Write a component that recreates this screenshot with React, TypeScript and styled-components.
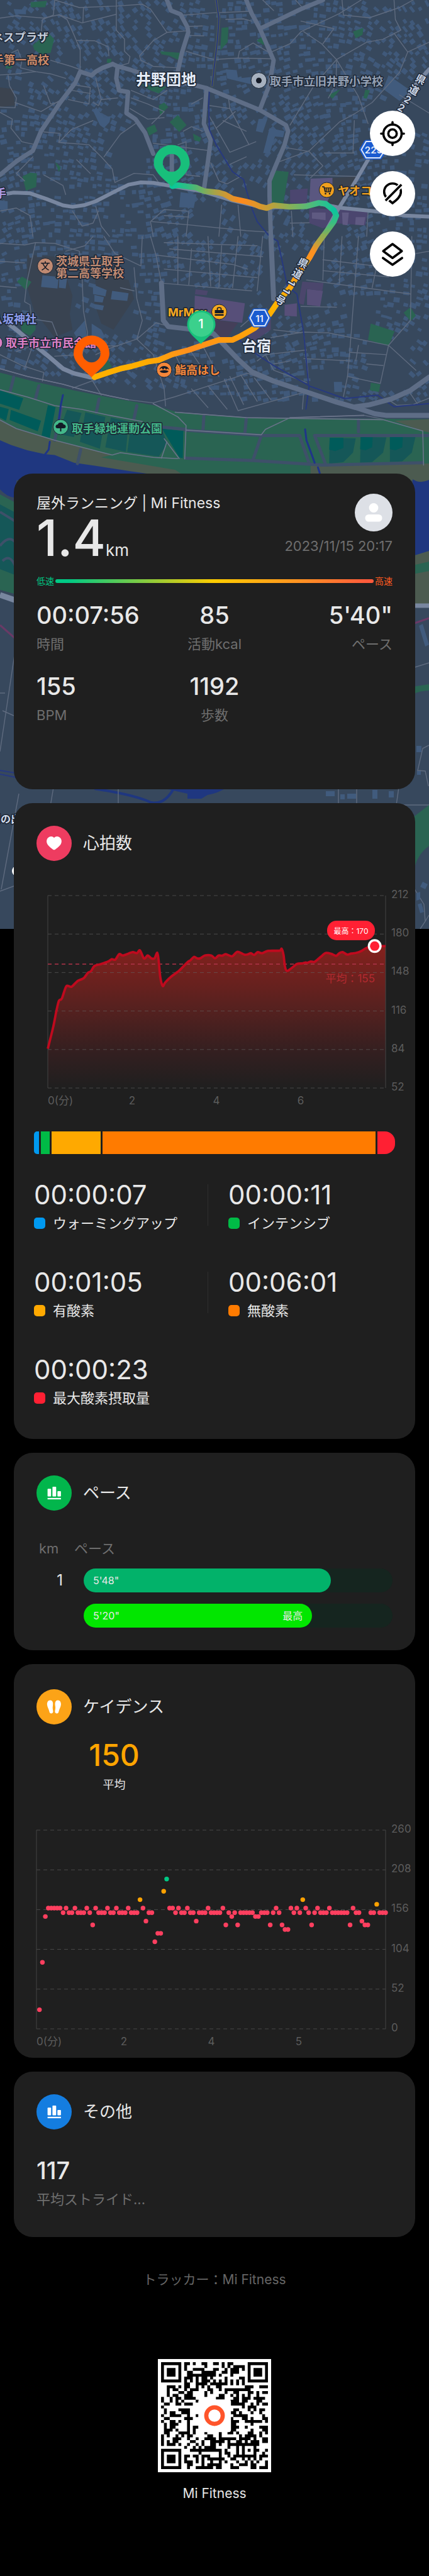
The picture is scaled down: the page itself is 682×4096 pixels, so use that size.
import React from 'react';
import styled, { createGlobalStyle } from 'styled-components';

const color = {
  page: '#000000',
  card: '#1f1f1f',
  text: '#e8e8e8',
  muted: '#6e6e6e',
  axis: '#5c5c5c',
  grid: '#444444',
};

const GlobalStyle = createGlobalStyle`
  * { box-sizing: border-box; }
  body {
    margin: 0;
    background: ${color.page};
    color: ${color.text};
    font-family: Inter, 'Noto Sans CJK JP', sans-serif;
  }
`;

/* ---------- layout ---------- */

const Page = styled.div`
  display: grid;
  grid-template-columns: minmax(0, 1fr);
`;

const MapLayer = styled.div`
  grid-area: 1 / 1;
  align-self: start;
  svg { display: block; width: 100%; height: auto; }
`;

const Content = styled.main`
  grid-area: 1 / 1;
  position: relative;
  display: flex;
  flex-direction: column;
  gap: 22px;
  padding: 0 22px 116px;
`;

const MapControls = styled.div`
  display: flex;
  flex-direction: column;
  align-items: flex-end;
  gap: 24px;
  padding: 176px 0 291px;
`;

const RoundButton = styled.button`
  width: 72px;
  height: 72px;
  padding: 0;
  border: 0;
  border-radius: 50%;
  background: #ffffff;
  cursor: pointer;
  svg { display: block; width: 72px; height: 72px; }
`;

const Card = styled.section<{ $top?: number; $bottom: number }>`
  padding: ${(p) => p.$top ?? 36}px 0 ${(p) => p.$bottom}px;
  border-radius: 30px;
  background: ${color.card};
`;

/* ---------- summary ---------- */

const SummaryHead = styled.div`
  display: flex;
  justify-content: space-between;
  padding: 0 36px;
`;

const ActivityTitle = styled.h1`
  margin: 0;
  font-size: 23px;
  line-height: 30px;
  font-weight: 400;
`;

const Distance = styled.p`
  margin: 0;
  font-size: 80px;
  line-height: 80px;
  font-weight: 500;
  span { font-size: 26px; line-height: 26px; font-weight: 400; }
`;

const Runner = styled.div`
  display: flex;
  flex-direction: column;
  align-items: flex-end;
  gap: 10px;
  svg { width: 60px; height: 60px; }
`;

const Timestamp = styled.time`
  font-size: 22px;
  line-height: 26px;
  color: ${color.muted};
`;

const SpeedScale = styled.div`
  display: flex;
  align-items: center;
  gap: 2px;
  margin-top: 19px;
  padding: 0 36px;
  font-size: 14px;
  line-height: 20px;
`;

const SpeedLabel = styled.span<{ $color: string }>`
  color: ${(p) => p.$color};
`;

const SpeedBar = styled.div`
  flex: 1;
  height: 6px;
  border-radius: 3px;
  background: linear-gradient(90deg, #00c985 4%, #ffcc00 50%, #ff8a26 80%, #ff5a3c 98%);
`;

const StatGrid = styled.dl`
  display: grid;
  grid-template-columns: repeat(3, minmax(0, 1fr));
  row-gap: 29px;
  margin: 20px 0 0;
  padding: 0 36px;
`;

const Stat = styled.div<{ $align?: string }>`
  display: flex;
  flex-direction: column-reverse;
  gap: 8px;
  text-align: ${(p) => p.$align ?? 'left'};
  dt { font-size: 22px; line-height: 28px; color: ${color.muted}; }
  dd { margin: 0; font-size: 38px; line-height: 48px; font-weight: 500; }
`;

const SingleStat = styled.dl`
  margin: 41px 0 0;
  padding: 0 36px;
`;

/* ---------- section heading ---------- */

const Heading = styled.header`
  display: flex;
  align-items: center;
  gap: 18px;
  padding: 0 36px;
  h2 { margin: 0; font-size: 26px; line-height: 36px; font-weight: 400; }
`;

const Badge = styled.span<{ $color: string }>`
  width: 56px;
  height: 56px;
  border-radius: 50%;
  background: ${(p) => p.$color};
  svg { display: block; width: 56px; height: 56px; fill: #ffffff; }
`;

const ChartBox = styled.figure<{ $top: number }>`
  margin: ${(p) => p.$top}px 0 0;
  svg { display: block; width: 100%; height: auto; }
`;

/* ---------- heart rate zones ---------- */

const ZoneBar = styled.div`
  display: flex;
  gap: 3px;
  height: 36px;
  margin: 30px 32px 0;
  border-radius: 5px 16px 16px 5px;
  overflow: hidden;
`;

const ZoneSlice = styled.span<{ $color: string; $seconds: number }>`
  flex: ${(p) => p.$seconds} 0 0;
  background: ${(p) => p.$color};
`;

const ZoneGrid = styled.div`
  display: grid;
  grid-template-columns: 277fr 265fr;
  gap: 53px 32px;
  margin: 38px 32px 0;
`;

const ZoneItem = styled.div<{ $divider: boolean }>`
  display: flex;
  align-items: center;
  justify-content: space-between;
  &::after {
    content: '';
    width: 1px;
    height: 66px;
    background: ${(p) => (p.$divider ? '#2e2e2e' : 'transparent')};
  }
`;

const ZoneTime = styled.div`
  font-size: 42px;
  line-height: 54px;
`;

const ZoneName = styled.div<{ $color: string }>`
  display: flex;
  align-items: center;
  gap: 12px;
  margin-top: 4px;
  font-size: 22px;
  line-height: 28px;
  &::before {
    content: '';
    width: 18px;
    height: 18px;
    border-radius: 5px;
    background: ${(p) => p.$color};
  }
`;

/* ---------- pace ---------- */

const PaceTable = styled.table`
  width: calc(100% - 72px);
  margin: 46px 36px 0;
  border-collapse: collapse;
  table-layout: fixed;
  th {
    padding: 0;
    font-size: 22px;
    line-height: 28px;
    font-weight: 400;
    text-align: left;
    color: ${color.muted};
  }
  thead th:first-child { width: 60px; padding-left: 4px; }
  tbody th {
    padding: 18px 18px 0 0;
    font-size: 24px;
    line-height: 38px;
    text-align: right;
    color: ${color.text};
  }
  td { padding: 18px 0 0 15px; }
`;

const PaceTrack = styled.div`
  border-radius: 19px;
  background: #15251f;
`;

const PaceFill = styled.div<{ $color: string }>`
  display: flex;
  justify-content: space-between;
  height: 38px;
  padding: 0 15px;
  border-radius: 19px;
  background: ${(p) => p.$color};
  font-size: 16px;
  line-height: 38px;
`;

/* ---------- cadence ---------- */

const CadenceGrid = styled.div`
  display: grid;
  grid-template-columns: 1fr 1fr;
  margin-top: 20px;
  text-align: center;
`;

const CadenceValue = styled.div`
  font-size: 48px;
  line-height: 58px;
  font-weight: 500;
  color: #ffa500;
`;

const CadenceLabel = styled.div`
  margin-top: 6px;
  font-size: 18px;
  line-height: 24px;
`;

/* ---------- footer ---------- */

const Footer = styled.footer`
  display: flex;
  flex-direction: column;
  align-items: center;
  padding-top: 31px;
  font-size: 21px;
  line-height: 30px;
`;

const Tracker = styled.p`
  margin: 0 0 111px;
  color: #666666;
`;

const QrBox = styled.div`
  width: 180px;
  height: 180px;
  margin-bottom: 19px;
  svg { display: block; width: 100%; height: 100%; }
`;

/* ---------- map drawing ---------- */

const BUILDING = '#415b7d';
const PARK = '#2a6452';

/* Street polylines of the northern and the southern map sheet. */
const northStreets = [
  '0,120 60,105 160,120 215,98 245,130 270,230 293,330 293,475',
  '200,0 195,100 155,130 150,220', '215,98 300,152 425,95', '200,0 290,50 425,40 520,28',
  '425,0 425,200 455,260 455,340 475,375 470,420 430,440',
  '520,28 550,60 610,215 560,270 510,370 515,400 560,440 650,450', '610,215 680,205', '303,150 305,50',
  '280,268 345,270 395,310 398,370', '0,390 65,330 80,400 75,450 130,475 185,490 240,520', '0,497 60,490 130,475',
  '185,400 260,440 290,460', '160,570 185,690 230,670', '30,500 35,570 60,650 55,715 0,710', '55,680 150,740 215,670',
  '0,745 45,790 40,850 80,940 130,960', '160,875 220,885 215,945 325,960 370,1040 410,1120 420,1210',
  '495,820 440,890 380,1040', '215,945 260,860 340,800', '280,1060 330,1150', '680,340 780,395 870,385 990,390',
  '870,385 875,340 925,285 985,350', '670,100 780,85 910,75', '825,128 890,125 920,140', '690,175 740,172', '690,235 745,238',
  '985,350 1060,290 1100,210 1240,90 1320,0', '1250,0 1255,100 1350,118 1460,50 1510,0',
  '1440,0 1445,130 1465,200 1400,260 1340,280 1230,395 1150,560 1060,830', '1110,210 1175,290 1230,395 1228,560 1200,650',
  '1100,140 1220,190 1180,290', '1440,220 1490,345 1460,480 1360,680 1300,750 1240,810 1130,1000 1010,1080', '1490,345 1568,280',
  '1230,395 1310,640 1345,820', '1460,630 1568,750', '1045,980 1130,1005 1180,1100 1135,1180', '1185,1015 1295,1015', '1295,800 1290,1015',
  '765,700 840,720 835,650', '765,770 840,1010 935,940', '840,720 910,960', '815,800 900,870', '790,850 860,740', '840,1090 900,1040',
  '1075,1160 1300,1170', '1345,1410 1340,1568', '555,1470 680,1490 900,1530 985,1540', '560,1568 550,1470 600,1390 685,1400',
  '810,1360 800,1568', '870,1360 880,1568', '690,1400 680,1568', '600,1430 690,1440', '350,1370 370,1500 400,1568', '0,1400 60,1380 110,1430 120,1568',
  '265,1400 300,1500 340,1480 360,1400', '480,650 540,690 600,740 555,820', '475,720 540,790 600,780', '560,950 640,970 770,1000',
  '770,1080 800,1200 830,1220 880,1170', '420,1210 490,1150 560,1160 580,1210', '610,600 560,660 480,600', '700,690 740,650', '670,870 700,840 740,870',
  '260,560 330,580 325,690 250,660', '265,600 330,620', '370,660 360,700 340,680', '350,520 370,660 430,650', '120,1040 60,1150 90,1200',
  '160,1160 230,1230 240,1290', '1060,1480 1130,1478', '1065,1400 1070,1568', '650,960 680,940 680,1160 730,1170', '1080,0 1110,60', '960,0 1000,70',
];

const southStreets = [
  '0,45 90,55 130,40 200,45 290,95 300,260', '130,40 100,280 95,340 90,420 110,440 115,530 190,550 210,640',
  '340,0 310,60 240,95', '520,0 515,190 420,110 380,0', '490,200 500,400 520,540 500,660', '300,260 305,480 320,620 315,700',
  '550,0 570,120 590,300', '590,300 920,350', '570,120 850,180 905,210', '650,0 650,310', '760,0 770,320', '870,0 850,330', '960,0 940,350',
  '620,80 960,130', '600,40 940,60', '600,210 940,265', '700,80 690,310', '810,60 800,325', '500,660 570,555 600,570',
  '500,660 400,720 350,760', '500,660 560,760 600,980 605,1090', '265,975 350,920', '330,905 370,1020', '0,760 80,830 160,875 155,930',
  '60,740 120,700 90,850', '0,850 100,900 230,950 300,985 400,1025 470,1050 560,1070 640,1030 905,880', '0,985 100,1032 200,1088 300,1112 400,1150 520,1190 680,1235',
  '0,1180 60,1235 200,1310 410,1405 440,1390 560,1420 650,1428', '560,1075 650,1160 680,1215 675,1430', '600,1300 655,1428', '610,1320 590,1425',
  '680,1245 955,1275 970,1240 1060,1165 1330,1150 1400,1175 1545,1250 1548,1470', '640,1130 900,1165 1400,1178',
  '820,920 870,1120 1115,1000', '905,880 990,935 1110,1000 1105,1110', '760,960 830,1110', '700,980 760,1100', '840,900 890,1080', '880,890 940,1060', '930,910 990,1050',
  '740,700 800,900', '690,720 740,850', '640,760 680,900', '1110,620 1125,860 1128,960', '990,650 1110,615 1200,620 1420,700', '940,800 970,760 1120,730',
  '970,760 1000,860 1120,940', '1270,900 1390,945 1420,700 1500,540 1505,0', '1420,700 1520,860', '1255,1030 1270,900 1280,700 1310,0',
  '1120,280 1500,370', '1185,0 1180,280', '1250,0 1240,300', '1180,150 1420,200', '1180,220 1420,260', '1380,160 1360,330', '1400,0 1420,200',
  '1110,785 1280,800', '1100,450 1230,455', '1280,745 1410,760', '1300,800 1310,700', '1340,820 1400,830', '1420,1050 1450,1085 1510,1080 1568,1040',
  '1520,110 1568,95', '1490,985 1525,1075', '1000,820 1060,800', '880,580 920,520', '1000,600 1100,620', '200,770 300,760 310,700 430,705', '60,330 0,320',
  '0,160 90,170', '440,330 490,350',
];

const northMain = [
  '610,0 625,70 660,95 685,180 688,215 665,350 650,470',
  '412,425 430,440 480,465 540,500 620,535 700,560 755,585 830,640 950,730 1045,830 1053,870 1040,960 1005,1110 985,1200 985,1300 990,1568',
  '412,425 375,450 350,475 335,500 293,475 275,550 220,680 150,870 120,1000 60,1070 0,1160',
  '430,440 425,520 435,600 468,610 462,750 495,790 530,880 560,1020',
  '900,0 920,90 950,190 1000,400 985,560 950,725', '950,190 1020,130 1100,60 1180,0',
  '755,585 745,820 770,930 760,1070 745,1260', '628,1030 628,1220',
];

const southMain = [
  '990,0 1000,400',
  '590,300 597,540 615,580 690,595 730,605 780,625 810,680 870,790 920,870 1000,930 1120,1000 1230,1065 1300,1100 1370,1140 1410,1150 1568,1150',
  '1300,1095 1350,1082 1430,1045 1500,990 1568,905',
];

const northParks = [
  '112,15 172,5 165,48 112,48', '120,300 175,215 198,260 185,350 150,360 125,330', '810,185 835,180 832,280 805,335',
  '585,340 660,350 655,400 620,370 590,360', '938,270 960,240 965,300', '1290,210 1328,185 1325,230 1300,255', '515,560 610,575 580,620 550,600',
  '580,700 600,680 615,710 585,765', '620,810 650,762 682,830 655,875', '535,850 565,825 575,870 545,900', '705,885 735,915 730,940 710,930',
  '995,1130 1055,1140 1035,1355 990,1355', '82,1170 110,1145 135,1150 132,1240 95,1265', '202,1075 222,1110 215,1140', '1200,630 1245,590 1215,655', '1335,595 1352,600 1340,655 1328,650',
  '392,390 408,390 405,420 390,415', '20,440 48,430 40,455 22,455',
];

const southParks = [
  '62,290 80,258 115,292 95,345', '75,550 130,560 130,600 110,640 80,610', '1475,490 1500,455 1520,510 1500,545', '1355,560 1442,610 1420,705 1345,665',
  '1355,940 1390,950 1385,1000 1352,990', '370,850 390,780 410,840 375,865',
];

/* Small houses: one jittered, rotated rectangle per lot. */
function buildHouses(): string {
  let seed = 20231115;
  const next = () => {
    seed = (seed * 1103515245 + 12345) % 2147483648;
    return seed / 2147483648;
  };
  const empty = [
    [355, 195, 70, 60], [370, 300, 60, 75], [305, 320, 45, 60], [0, 140, 22, 36], [255, 115, 75, 20], [610, 130, 72, 80],
    [40, 410, 80, 130], [148, 425, 68, 105], [262, 456, 135, 90], [255, 452, 45, 70], [455, 400, 60, 100], [0, 230, 10, 40],
    [550, 470, 50, 60], [585, 540, 70, 80], [495, 590, 50, 40], [205, 175, 55, 40], [175, 210, 60, 70], [490, 280, 60, 100], [420, 400, 20, 90], [30, 85, 60, 40],
  ];
  let d = '';
  for (let y = 3; y < 640; y += 10) {
    for (let x = 3; x < 680; x += 11) {
      const skip = next() < 0.4;
      const jx = x + next() * 5;
      const jy = y + next() * 4;
      const w = 2.6 + next() * 3;
      const h = 2 + next() * 2;
      const a = Math.sin(x / 90) * 0.6 + Math.cos(y / 110) * 0.5 + (next() - 0.5) * 0.2;
      if (skip || jy > 588 + x * 0.13) continue;
      if (empty.some(([ex, ey, ew, eh]) => jx > ex && jx < ex + ew && jy > ey && jy < ey + eh)) continue;
      const c = Math.cos(a);
      const s = Math.sin(a);
      const corner = (u: number, v: number) => `${(jx + u * c - v * s).toFixed(1)} ${(jy + u * s + v * c).toFixed(1)}`;
      d += `M${corner(-w, -h)}L${corner(w, -h)}L${corner(w, h)}L${corner(-w, h)}Z`;
    }
  }
  return d;
}

const houses = buildHouses();

const Streets = ({ lines, stroke, width }: { lines: string[]; stroke: string; width: number }) => (
  <g fill="none" stroke={stroke} strokeWidth={width} strokeLinejoin="round" strokeLinecap="round">
    {lines.map((points) => (
      <polyline key={points} points={points} vectorEffect="non-scaling-stroke" />
    ))}
  </g>
);

const Areas = ({ shapes, fill }: { shapes: string[]; fill: string }) => (
  <g fill={fill}>
    {shapes.map((points) => (
      <polygon key={points} points={points} />
    ))}
  </g>
);

const MapLabel = styled.text<{ $size?: number }>`
  font-size: ${(p) => p.$size ?? 18}px;
  font-weight: 700;
  dominant-baseline: central;
  stroke: #1b2533;
  stroke-width: 3px;
  stroke-linejoin: round;
  paint-order: stroke;
`;

const NORTH = 'scale(0.435 0.2397)';
const SOUTH = 'translate(0 375.9) scale(0.435 0.2474)';

const DropPin = ({ x, y, fill }: { x: number; y: number; fill: string }) => (
  <path
    transform={`translate(${x} ${y})`}
    fill={fill}
    fillRule="evenodd"
    d="M0 38C-8 29-28.500 16-28.500 0A28.500 28.500 0 0 1 28.500 0C28.500 16 8 29 0 38ZM0-14.300A14.300 14.300 0 1 0 0 14.300A14.300 14.300 0 1 0 0-14.300Z"
  />
);

const roadName: [string, number, number, number][] = [
  ['県', 482, 418, 30], ['道', 473, 435, 30], ['1', 464, 450, 120], ['1', 456, 463, 120], ['号', 446, 477, 30],
  ['県', 669, 126, 30], ['道', 658, 143, 30], ['2', 648, 158, 30], ['2', 638, 171, 30],
];

const RouteMap = () => (
  <svg viewBox="0 0 682 1477" role="img" aria-label="ルートマップ">
    <defs>
      <linearGradient id="legEast" gradientUnits="userSpaceOnUse" x1="630" y1="0" x2="1230" y2="0">
        <stop offset="0" stopColor="#08c89a" />
        <stop offset="0.1" stopColor="#35bd80" />
        <stop offset="0.26" stopColor="#a9a246" />
        <stop offset="0.42" stopColor="#ff8a1c" />
        <stop offset="0.55" stopColor="#d3992f" />
        <stop offset="0.7" stopColor="#8fae53" />
        <stop offset="0.88" stopColor="#3fbe84" />
        <stop offset="1" stopColor="#0bc59d" />
      </linearGradient>
      <linearGradient id="legTurn" gradientUnits="userSpaceOnUse" x1="0" y1="1395" x2="0" y2="1568">
        <stop offset="0" stopColor="#0bc59d" />
        <stop offset="0.5" stopColor="#3dbd80" />
        <stop offset="1" stopColor="#8fae53" />
      </linearGradient>
      <linearGradient id="legSouth" gradientUnits="userSpaceOnUse" x1="1180" y1="0" x2="345" y2="908">
        <stop offset="0" stopColor="#8fae53" />
        <stop offset="0.08" stopColor="#ff9020" />
        <stop offset="0.25" stopColor="#ffa810" />
        <stop offset="0.36" stopColor="#ffb400" />
        <stop offset="0.6" stopColor="#ff9a10" />
        <stop offset="0.7" stopColor="#ff8e1e" />
        <stop offset="0.85" stopColor="#ffae00" />
        <stop offset="1" stopColor="#ffb000" />
      </linearGradient>
    </defs>

    <rect width="682" height="1477" fill="#37485d" />

    <g transform={SOUTH}>
      <Areas
        fill="#394351"
        shapes={['100,120 200,130 240,250 265,380 255,500 265,600 200,650 125,480 100,330', '350,240 470,280 490,400 460,480 415,600 370,560 345,430']}
      />
      <Areas
        fill={BUILDING}
        shapes={[
          '155,250 215,260 210,335 150,325', '217,260 245,270 240,335 215,330', '340,310 390,345 385,385 340,370', '410,350 470,365 465,415 405,405',
          '345,375 380,390 375,425 345,420', '345,435 380,445 375,475 345,465', '270,620 310,540 318,650 280,650', '335,560 370,600 385,650 335,650',
          '1220,935 1250,935 1250,1000 1222,1000',
        ]}
      />
    </g>
    <path d={houses} fill={BUILDING} opacity="0.92" />

    <g transform={NORTH}>
      <Areas fill="#3b434f" shapes={['1215,1180 1315,1170 1240,1370 1190,1340', '0,580 48,590 55,700 0,710']} />
      <Areas fill="#5a5780" shapes={['1135,1185 1215,1180 1215,1260 1195,1345 1130,1345']} />
      <Areas fill="#4b466f" shapes={['1060,1260 1125,1250 1120,1355 1060,1345', '1130,1380 1345,1400 1335,1495 1215,1480 1180,1515 1130,1480']} />
      <Areas fill="#5f5a82" shapes={['1140,1410 1190,1410 1190,1460 1140,1450', '1250,1410 1275,1410 1270,1495 1252,1490', '1300,1440 1335,1440 1330,1495 1298,1490']} />
      <Areas fill={PARK} shapes={northParks} />
      <Areas
        fill={BUILDING}
        shapes={[
          '340,735 352,710 380,780 405,770 400,810 380,850 365,830', '825,460 865,465 870,520 920,510 920,560 830,520', '945,790 978,785 960,880 935,870',
          '985,850 1040,870 1035,910 1005,905 985,1020 962,1015', '660,1275 718,1290 708,1380 655,1375', '1420,500 1500,600 1460,670 1400,590',
          '50,60 95,65 95,95 55,92', '0,1330 28,1335 28,1390 0,1390',
        ]}
      />
      <Streets lines={northStreets} stroke="#5f6b7f" width={1.4} />
      <Streets lines={['790,0 800,120 795,260 775,570']} stroke="#56604f" width={4} />
      <Streets
        lines={['790,0 800,120 795,260 775,570', '765,590 763,700 765,860 790,960 820,1050 850,1140 890,1190 900,1260 920,1380 940,1470 985,1568']}
        stroke="#27397f"
        width={2}
      />
      <Streets lines={northMain} stroke="#5e6d86" width={7} />
      <Streets
        lines={[
          '0,1292 50,1278 110,1282 170,1320 230,1362 265,1372 310,1360 350,1335 420,1270 470,1225 515,1210 560,1213 630,1235 740,1270 850,1330 960,1376 1060,1374 1165,1350 1240,1378 1390,1405 1480,1430 1568,1437',
          '1345,1060 1290,1230 1240,1375 1180,1568', '1568,460 1520,560 1460,730 1400,900',
        ]}
        stroke="#78869f"
        width={6}
      />
    </g>

    <g transform={SOUTH}>
      <Areas fill="#574f79" shapes={['712,380 895,430 885,555 710,520', '1122,338 1180,350 1170,450 1122,440', '1040,440 1085,430 1085,515 1040,510']} />
      <Areas fill="#4b466c" shapes={['1105,290 1182,300 1178,350 1120,338 1110,440 1090,430', '905,600 990,520 990,600 930,670 900,640', '715,340 760,350 755,378 712,372']} />
      <Areas fill="#443f59" shapes={['705,520 870,555 830,650 800,655 730,600']} />
      <Areas fill={PARK} shapes={southParks} />
      <Streets lines={southStreets} stroke="#5f6b7f" width={1.4} />
      <Streets
        lines={['985,0 1015,30 1030,150 1050,320 1085,370 1110,620 1128,960 1260,1042 1380,1020 1440,1095 1568,1075', '870,660 940,760 1000,830 1130,960 1118,1110']}
        stroke="#27397f"
        width={2}
      />

      {/* river bank, sports fields and the river */}
      <Areas fill={PARK} shapes={['0,875 130,935 270,990 400,1035 560,1085 650,1130 750,1150 900,1165 1568,1175 1568,1568 0,1568']} />
      <Areas
        fill="#4c5b50"
        shapes={['0,1180 60,1235 200,1310 410,1405 370,1420 640,1500 700,1568 0,1568', '1135,1475 1568,1460 1568,1568 1135,1568', '1440,1185 1568,1175 1568,1260 1545,1250']}
      />
      <Areas fill="#1f3780" shapes={['0,1310 40,1340 100,1375 165,1400 200,1405 270,1455 350,1475 480,1510 560,1530 600,1568 0,1568']} />
      <Areas
        fill="#155758"
        shapes={[
          '245,1115 298,1135 270,1290 212,1270', '312,1130 385,1160 365,1365 292,1320', '405,1165 470,1190 460,1385 385,1355', '480,1195 590,1235 612,1330 580,1415 465,1385',
          '1205,1295 1300,1298 1290,1390 1255,1450 1203,1462', '1318,1290 1412,1292 1400,1390 1360,1450 1316,1455', '1425,1290 1518,1290 1505,1390 1470,1445 1425,1450',
        ]}
      />
      <Areas
        fill="#005b5a"
        shapes={[
          '0,990 85,1040 70,1115 0,1075', '0,1095 32,1110 22,1185 0,1165', '40,1115 150,1185 138,1252 35,1180', '175,1085 203,1098 182,1295 152,1280',
          '592,1235 670,1250 668,1425 655,1420', '1205,1295 1255,1295 1255,1360 1225,1380 1203,1370', '1318,1290 1362,1292 1360,1355 1335,1375 1316,1368', '1425,1290 1472,1290 1470,1355 1445,1375 1425,1368',
        ]}
      />
      <Streets
        lines={[
          '50,905 38,990', '142,960 130,1040', '362,1045 352,1130', '500,1088 490,1170', '745,1155 742,1240', '900,1170 895,1265', '1310,1180 1310,1255',
          '955,1280 925,1435', '1095,1280 1130,1460', '1150,1280 1190,1465', '678,1245 955,1280 1095,1280', '1150,1280 1568,1280', '678,1425 925,1440 1180,1470 1545,1455', '225,1095 200,1310', '590,1225 680,1240', '295,1370 283,1460',
        ]}
        stroke="#3e5069"
        width={5}
      />
      <Streets lines={['0,985 100,1032 200,1088 300,1112 400,1150 520,1190', '0,850 100,900 230,950 300,985 400,1025 470,1050', '0,1180 60,1235 200,1310 410,1405 440,1390 560,1420 650,1428', '640,1130 900,1165 1400,1178 1545,1250 1548,1470', '560,1075 650,1160 680,1215 675,1430', '600,1300 655,1428', '610,1320 590,1425', '680,1245 955,1275 970,1240 1060,1165 1330,1150']} stroke="#6a7389" width={1.6} />
      <Streets lines={['230,1020 222,1085 215,1180', '182,1320 178,1370 165,1400', '1115,1240 1120,1310 1150,1455', '1162,1485 1170,1530']} stroke="#1f3589" width={3} />

      <Streets lines={southMain} stroke="#5e6d86" width={8} />
      <Streets
        lines={['30,560 60,600 100,660 170,760 230,850 270,880 330,905 400,874 540,808 740,705 800,672 850,668 930,590 985,500 1060,330 1130,140 1180,0']}
        stroke="#78869f"
        width={7}
      />
    </g>

    {/* edges of the map that stay visible beside the cards */}
    <g>
      <path d="M0 740H26V792Q10 790 0 778Z" fill="#1f3780" />
      <path d="M0 786L26 800V945L0 938Z" fill={PARK} />
      <path d="M0 802L26 816V915L0 905Z" fill="#155758" />
      <path d="M0 868Q14 850 24 862M0 814L26 830M4 892Q16 880 24 900" fill="none" stroke="#3e5069" strokeWidth="4" />
      <path d="M0 938L26 947V1477H0Z" fill="#37485d" />
      <path d="M0 946L26 955" stroke="#78869f" strokeWidth="9" />
      <path d="M0 994L24 1015" stroke="#6a3a66" strokeWidth="3" />
      <path d="M24 1035L0 1195M0 1102H8M4 1130L22 1138" fill="none" stroke="#5f6b7f" strokeWidth="1.400" />
      <path d="M656 745H682V763Q668 770 656 764Z" fill="#4c5b50" />
      <path d="M656 762Q668 770 682 763V878L656 884Z" fill="#1f3780" />
      <path d="M656 884L682 876V962H656Z" fill="#4c5b50" />
      <path d="M656 899L682 893V908L656 913Z" fill={PARK} />
      <path d="M656 960H682V1477H656Z" fill="#37485d" />
      <path d="M656 963H682" stroke="#78869f" strokeWidth="7" />
      <path d="M656 992L682 983" stroke="#6a3a66" strokeWidth="3" />
      <path d="M666 995L672 992L682 1025L676 1028ZM662 1186H670V1196H662ZM663 1225H669V1232H663Z" fill={BUILDING} />
      <path d="M656 1194L682 1184V1200L656 1210Z" fill={PARK} opacity="0" />
      <path d="M656 1092Q668 1090 682 1088V1098Q668 1098 656 1104Z" fill={PARK} />
      <path d="M656 1062L682 1054M682 1185L672 1190L664 1225L676 1226L682 1254" fill="none" stroke="#5f6b7f" strokeWidth="1.400" />
      <rect y="1250" width="682" height="32" fill="#37485d" />
      <path d="M150 1254Q215 1264 240 1276Q262 1280 276 1254" fill="none" stroke="#1f3780" strokeWidth="4" />
      <path d="M245 1250H365Q345 1262 330 1264L320 1270H298V1262Z" fill="#1f3780" />
      <path d="M85 1252L80 1282M188 1252V1282M538 1252V1280H682M567 1252V1278M634 1252L630 1280" fill="none" stroke="#5f6b7f" strokeWidth="1.400" />
      <path d="M0 1225L30 1230M0 1231L30 1237" stroke="#27397f" strokeWidth="2" />
      <path d="M518 1258H532V1266H518ZM541 1263H548V1271H541ZM552 1262H566V1270H552ZM592 1256H600V1270H592ZM618 1258H626V1268H618Z" fill={BUILDING} />
      <path d="M682 1280V1345Q666 1356 660 1376L656 1300Z" fill={PARK} />
      <path d="M30 1262L2 1414M0 1417L30 1406M658 1412L674 1438L676 1465L668 1477M676 1465L682 1455" fill="none" stroke="#5f6b7f" strokeWidth="1.400" />
      <path d="M664 1438L670 1436L674 1450L668 1452ZM672 1402L680 1406L676 1414L668 1410ZM662 1420L668 1418L668 1430L662 1432Z" fill={BUILDING} />
      <circle cx="27" cy="1385" r="8" fill="#ffffff" />
      <MapLabel x="33" y="1302" $size={16} textAnchor="end" fill="#d5deee">利の出</MapLabel>
    </g>

    {/* place labels */}
    <MapLabel x="77" y="59" textAnchor="end" fill="#c3ccd9">ネスプラザ</MapLabel>
    <MapLabel x="78" y="95" textAnchor="end" fill="#cf8b68">手第一高校</MapLabel>
    <MapLabel x="216" y="126" $size={24} fill="#e6edf8">井野団地</MapLabel>
    <MapLabel x="429" y="129" fill="#94a0b3">取手市立旧井野小学校</MapLabel>
    <MapLabel x="537" y="303" fill="#f0a01e">ヤオコー</MapLabel>
    <MapLabel x="10" y="307" textAnchor="end" fill="#b09be6">手</MapLabel>
    <MapLabel x="89" y="415" fill="#c08a72">茨城県立取手</MapLabel>
    <MapLabel x="89" y="434" fill="#c08a72">第二高等学校</MapLabel>
    <MapLabel x="58" y="507" textAnchor="end" fill="#8c9cec">八坂神社</MapLabel>
    <MapLabel x="9" y="545" fill="#dc80c6">取手市立市民会館</MapLabel>
    <MapLabel x="267" y="496" fill="#f5a81f">MrMax</MapLabel>
    <MapLabel x="385" y="550" $size={23} fill="#e6edf8">台宿</MapLabel>
    <MapLabel x="278" y="588" fill="#f5873a">鮨高はし</MapLabel>
    <MapLabel x="114" y="681" fill="#43b88a">取手緑地運動公園</MapLabel>

    {/* place markers */}
    <g stroke="#1b2533" strokeWidth="1">
      <circle cx="411.500" cy="128" r="12.500" fill="#a7b1bf" />
      <circle cx="519.500" cy="302" r="12" fill="#f0a01e" />
      <circle cx="72" cy="423" r="12.500" fill="#c08a72" />
      <circle cx="348.500" cy="496" r="12" fill="#f5a81f" />
      <circle cx="261" cy="588" r="12" fill="#f5873a" />
      <circle cx="96.500" cy="679" r="12" fill="#43b88a" />
      <circle cx="-6" cy="545" r="10" fill="#dc80c6" />
    </g>
    <circle cx="411.500" cy="128" r="4.500" fill="#141a26" />
    <g fill="none" stroke="#141a26" strokeWidth="1.600">
      <path d="M512 297H515L517 305H525L526.500 299H516" />
      <path d="M516.500 302H525.500M519 299V305M522.500 299V305" strokeWidth="1" />
      <path d="M65 418.500H79M72 415.500V418.500M68 419Q72 427 77.500 429.500M76 419Q72 427 66.500 429.500" />
      <path d="M345.500 493V491Q345.500 489 348.500 489Q351.500 489 351.500 491V493" />
    </g>
    <g fill="#141a26">
      <circle cx="517.500" cy="308" r="1.300" />
      <circle cx="524" cy="308" r="1.300" />
      <path d="M341.500 493H355.500V498H341.500ZM341.500 499.500H355.500V502H341.500Z" />
      <path d="M253 588Q255 582 261 582Q267 582 269 588L266 586L264 588L262 585L259 588L257 585ZM254 590Q261 587 268 590Q267 593 261 593Q255 593 254 590Z" />
      <path d="M96.500 672A4 4 0 0 1 101 675A3 3 0 0 1 102 681H97.500V686H95.500V681H91A3 3 0 0 1 92 675A4 4 0 0 1 96.500 672Z" />
    </g>

    {/* the run itself */}
    <g fill="none" strokeWidth="9" strokeLinejoin="round" strokeLinecap="round">
      <g transform={NORTH}>
        <polyline
          vectorEffect="non-scaling-stroke"
          stroke="url(#legEast)"
          points="630,1235 650,1228 690,1238 715,1243 745,1267 800,1278 820,1288 850,1318 900,1338 925,1350 950,1370 975,1380 1000,1362 1060,1372 1120,1368 1165,1346 1190,1352 1220,1395"
        />
        <polyline vectorEffect="non-scaling-stroke" stroke="url(#legTurn)" points="1220,1395 1229,1430 1220,1470 1200,1520 1180,1568" />
      </g>
      <g transform={SOUTH}>
        <polyline
          vectorEffect="non-scaling-stroke"
          stroke="url(#legSouth)"
          points="1180,0 1155,60 1130,140 1090,240 1060,330 1020,410 985,500 930,590 880,640 850,665 800,665 740,700 690,730 630,758 580,795 540,805 480,835 440,850 400,872 345,905"
        />
      </g>
    </g>

    {/* road names along the route */}
    {roadName.map(([char, x, y, turn]) => (
      <MapLabel key={x} $size={16} textAnchor="middle" fill="#ccd6e6" transform={`translate(${x} ${y}) rotate(${turn})`}>
        {char}
      </MapLabel>
    ))}

    {/* route shields */}
    <g stroke="#1a5bd0" strokeWidth="7" strokeLinejoin="round">
      <path d="M404 494H421L427 505.500L421 517H404L398 505.500Z" fill="#1a5bd0" />
      <path d="M582 226H604L612 238L604 250H582L575 238Z" fill="#1a5bd0" />
    </g>
    <g stroke="#dbe4f5" strokeWidth="2" fill="none">
      <path d="M404 493H421L427.500 505.500L421 518H404L397.500 505.500Z" />
      <path d="M582 225H604L612 238L604 251H582L574.500 238Z" />
    </g>
    <g fill="#e6edf8" fontSize="15" fontWeight="600" textAnchor="middle" dominantBaseline="central">
      <text x="412.500" y="506">11</text>
      <text x="594" y="238">229</text>
    </g>

    <DropPin x={273} y={259} fill="#18bf7b" />
    <DropPin x={145.5} y={562} fill="#ff5e00" />
    <path d="M319.500 547C313 539 297.500 530 297.500 516A22.500 22.500 0 0 1 342.500 516C342.500 530 326 539 319.500 547Z" fill="#18bf7b" />
    <circle cx="320" cy="516" r="19.500" fill="#3bd08c" />
    <text x="319.500" y="515" fill="#ffffff" fontSize="20" fontWeight="500" textAnchor="middle" dominantBaseline="central">1</text>
  </svg>
);

/* ---------- icons ---------- */

const LocateIcon = () => (
  <svg viewBox="0 0 72 72" fill="none" stroke="#000000" strokeWidth="3.600" aria-hidden="true">
    <circle cx="36" cy="36.500" r="14.500" />
    <circle cx="36" cy="36.500" r="6.700" />
    <path d="M36 18.400V22M36 51V54.600M17.900 36.500H21.500M50.500 36.500H54.100" strokeLinecap="round" />
  </svg>
);

const HidePinIcon = () => (
  <svg viewBox="0 0 72 72" fill="none" stroke="#000000" strokeWidth="3.600" aria-hidden="true">
    <path d="M36 51C29 45.500 22.700 40.500 22.700 33A13.300 13.300 0 0 1 49.300 33C49.300 40.500 43 45.500 36 51Z" />
    <path d="M23 49L52 20" stroke="#ffffff" strokeWidth="7.500" />
    <path d="M24.900 46.900L50.200 21.600" />
  </svg>
);

const LayersIcon = () => (
  <svg viewBox="0 0 72 72" fill="none" stroke="#000000" strokeWidth="3.600" strokeLinejoin="round" strokeLinecap="round" aria-hidden="true">
    <path d="M36 20L50.800 31.200L36 42.200L21.200 31.200Z" />
    <path d="M20.800 42.200L36 53L51.200 42.200" />
  </svg>
);

const AvatarIcon = () => (
  <svg viewBox="0 0 60 60" fill="#ffffff" role="img" aria-label="ユーザー">
    <circle cx="30" cy="30" r="30" fill="#dde0e6" />
    <circle cx="30" cy="22.500" r="7.400" />
    <rect x="16.500" y="33" width="27" height="11.500" rx="5.500" />
  </svg>
);

const HeartIcon = () => (
  <svg viewBox="0 0 56 56" aria-hidden="true">
    <path d="M28 19.200C26 16.800 22.800 16.500 20.300 17.800C16.200 20 15.200 24.500 17 28.500C18.700 32.200 23.500 35.800 26.500 37.900Q28 38.800 29.500 37.900C32.500 35.800 37.300 32.200 39 28.500C40.800 24.500 39.800 20 35.700 17.800C33.200 16.500 30 16.800 28 19.200Z" />
  </svg>
);

const BarsIcon = () => (
  <svg viewBox="0 0 56 56" aria-hidden="true">
    <rect x="17.600" y="21.300" width="5.600" height="12.300" rx="1" />
    <rect x="25.400" y="18" width="5.900" height="15.600" rx="1" />
    <rect x="33.300" y="25" width="5.600" height="8.600" rx="1" />
    <rect x="17.600" y="35.800" width="21.300" height="2.300" />
  </svg>
);

const foot =
  'M22 17.400C18.500 17.200 16.600 20.500 16.900 24.500C17.200 28.500 19.500 31 20.300 35C20.800 37.500 21.700 38.700 23.800 38.500C25.900 38.300 26.700 36.500 26.400 34.500C25.900 31.500 25.400 30 26 26.500C26.600 22.500 26.500 17.700 22 17.400Z';

const FeetIcon = () => (
  <svg viewBox="0 0 56 56" aria-hidden="true">
    <path d={foot} />
    <path d={foot} transform="translate(55.800 0) scale(-1 1)" />
  </svg>
);

/* ---------- charts ---------- */

const heartSamples: [number, number][] = [
  [0, 84.7], [7.6, 102.5], [12.3, 116.4], [15.8, 124.6], [20, 126.5], [26.3, 136.6], [33.7, 136.2], [42.6, 141.1], [50.8, 143.2], [57, 147.8],
  [61.3, 149.1], [66.4, 153.5], [75.7, 155.1], [85.8, 157.2], [90.9, 159.1], [95.9, 158.7], [101.4, 163.3], [106.8, 162.2], [114.6, 163.8],
  [120.9, 165], [126.7, 164.1], [131, 166.4], [136.8, 159.6], [141.9, 162.2], [146.9, 159.9], [151.6, 159.8], [155.5, 164.5], [157.5, 158.2],
  [159.8, 144.3], [163.3, 136.8], [166.8, 139.7], [175.7, 144.8], [186.6, 149.5], [197.9, 156.3], [202.6, 158.2], [207.7, 161], [212.3, 159.8],
  [217, 159.9], [223.2, 162.2], [232.2, 162.2], [237.6, 159.8], [242.7, 162.2], [247.8, 162], [252.8, 163.3], [261.8, 161.5], [269.5, 165.3],
  [279.3, 162.9], [284, 163.1], [288.6, 164.1], [293.3, 162.7], [298.4, 165], [304.2, 164.1], [313.1, 166], [329.5, 166.2], [332.2, 167.8],
  [335, 162.6], [337, 153], [340, 149.3], [346.2, 151.6], [354, 155.1], [361.8, 155.6], [365.7, 156.3], [369.2, 156.1], [373.5, 157.2],
  [379.3, 157], [389.1, 161.7], [394.9, 164.3], [402.7, 163.6], [409.7, 161.9], [414.3, 164.1], [419, 165], [425.6, 162.9], [431.1, 163.8],
  [437.7, 164.3], [445.5, 165.9], [451.3, 168], [457.2, 169.2], [465, 170], [480, 170],
];

function smoothPath(points: [number, number][]): string {
  let d = `M${points[0][0]} ${points[0][1]}`;
  for (let i = 0; i < points.length - 1; i += 1) {
    const [x0, y0] = points[Math.max(i - 1, 0)];
    const [x1, y1] = points[i];
    const [x2, y2] = points[i + 1];
    const [x3, y3] = points[Math.min(i + 2, points.length - 1)];
    const n = [x1 + (x2 - x0) / 7, y1 + (y2 - y0) / 7, x2 - (x3 - x1) / 7, y2 - (y3 - y1) / 7, x2, y2].map((v) => v.toFixed(2));
    d += `C${n.join(' ')}`;
  }
  return d;
}

const AxisText = styled.text`
  font-size: 17px;
  fill: ${color.axis};
  dominant-baseline: central;
`;

type FrameProps = { left: number; top: number; bottom: number; ticks: string[]; times: string[]; step: number };

const PLOT_RIGHT = 591;

const ChartFrame = ({ left, top, bottom, ticks, times, step }: FrameProps) => (
  <g>
    {ticks.map((tick, i) => {
      const y = top + ((bottom - top) * i) / (ticks.length - 1);
      return (
        <g key={tick}>
          <line x1={left} x2={PLOT_RIGHT} y1={y} y2={y} stroke="#666666" strokeOpacity="0.6" strokeDasharray="6 5" />
          <AxisText x="600" y={y - 2}>{tick}</AxisText>
        </g>
      );
    })}
    <path d={`M${left} ${top}V${bottom}M${PLOT_RIGHT} ${top}V${bottom}`} stroke={color.grid} />
    {times.map((time, i) => (
      <AxisText key={time} x={left + step * i} y={bottom + 20} textAnchor={i === 0 ? 'start' : 'middle'}>{time}</AxisText>
    ))}
  </g>
);

const HeartChart = () => {
  const left = 54;
  const top = 15;
  const bottom = 321;
  const px = (s: number) => left + (s / 480) * (PLOT_RIGHT - left);
  const py = (bpm: number) => top + ((212 - bpm) / 160) * (bottom - top);
  const line = smoothPath(heartSamples.map(([s, bpm]) => [px(s), py(bpm)]));
  const peakX = px(464.5);
  return (
    <svg viewBox="0 0 638 360" role="img" aria-label="心拍数の推移">
      <defs>
        <linearGradient id="heartFill" gradientUnits="userSpaceOnUse" x1="0" y1={py(170)} x2="0" y2={bottom}>
          <stop offset="0" stopColor="#84211d" />
          <stop offset="0.4" stopColor="#5a211f" />
          <stop offset="0.75" stopColor="#331f20" />
          <stop offset="1" stopColor="#1f1f1f" />
        </linearGradient>
      </defs>
      <path d={`${line}V${bottom}H${left}Z`} fill="url(#heartFill)" />
      <ChartFrame left={left} top={top} bottom={bottom} ticks={['212', '180', '148', '116', '84', '52']} times={['0(分)', '2', '4', '6']} step={134} />
      <line x1={left} x2={PLOT_RIGHT} y1={py(155)} y2={py(155)} stroke="#b0344a" strokeWidth="1.500" strokeDasharray="6 5" />
      <path d={line} fill="none" stroke="#bf0a1e" strokeWidth="3.800" strokeLinejoin="round" />
      <text x="574" y="147" textAnchor="end" dominantBaseline="central" fontSize="17" fill="#b22a30">平均：155</text>
      <rect x="498" y="55" width="76" height="31" rx="15" fill="#ff2033" />
      <text x="536" y="71" textAnchor="middle" dominantBaseline="central" fontSize="12" fill="#ffffff">最高：170</text>
      <circle cx={peakX} cy={py(170)} r="11" fill="#ffffff" />
      <circle cx={peakX} cy={py(170)} r="7.500" fill="#ff2033" />
    </svg>
  );
};

const cadenceSamples = [
  25, 87, 147, 158, 158, 158, 158, 158, 152, 158, 152, 152, 158, 152, 152, 152, 158, 152, 136, 158, 152, 152, 152, 158, 152, 152, 158, 152, 152, 152,
  158, 152, 152, 152, 169, 158, 141, 152, 152, 114, 125, 125, 180, 196, 158, 158, 152, 158, 152, 152, 158, 152, 152, 141, 152, 152, 152, 158, 152, 152,
  152, 152, 158, 136, 152, 147, 152, 136, 152, 152, 152, 152, 152, 147, 147, 152, 152, 152, 136, 152, 158, 152, 136, 130, 130, 158, 152, 158, 152, 169,
  158, 152, 136, 152, 158, 152, 152, 152, 158, 152, 152, 152, 152, 152, 152, 136, 158, 152, 152, 141, 136, 136, 152, 152, 163, 152, 152, 152,
];

const cadenceColor = (spm: number) => {
  if (spm > 185) return '#00c984';
  return spm > 160 ? '#ffa200' : '#ff3f5f';
};

const CadenceChart = () => {
  const left = 36;
  const top = 16;
  const bottom = 332;
  const pitch = (PLOT_RIGHT - left) / cadenceSamples.length;
  return (
    <svg viewBox="0 0 638 366" role="img" aria-label="ケイデンスの推移">
      <ChartFrame left={left} top={top} bottom={bottom} ticks={['260', '208', '156', '104', '52', '0']} times={['0(分)', '2', '4', '5']} step={139} />
      {cadenceSamples.map((spm, i) => (
        <circle key={i} cx={left + pitch * (i + 1)} cy={bottom - (spm / 260) * (bottom - top)} r="3.700" fill={cadenceColor(spm)} />
      ))}
    </svg>
  );
};

/* ---------- QR code ---------- */

/* Dark modules of each row, as single columns or ranges. */
const qrRows = [
  '8-9 11 14-15 18-19 21 23-24', '8 15 21 23 25-28', '8 11-14 18-19 22 24-26 28', '9-10 14-18 21-22 24-26', '9-18 20 24',
  '8-10 12 14-15 17 22 27-28', '8 10 12 14-16 18 20 22 24 26 28', '8-9 12-15 17-22 24 26 28', '2-4 6 8-9 12 14 16 19-20 29-31 34-36',
  '2 4-5 8 10-12 16-17 20 22-30', '2 6-7 9-10 15 17 22 25-26 30-31 33 35-36', '2 4-5 8-10 15 20-21 24 26 28 30 33', '0 3 5-6 8-11 19-21 25-26 28-30 32-35',
  '0 3 5 7 12 24-26 28-29 33-34', '1-2 5-6 8-10 24-28 31 33 35-36', '0 28 30-32', '1 6-9 25-26 30 32 34-35', '1 3-4 7-9 24-25 27 31 34', '0 3-6 9 12 25-29 35',
  '1-2 8-10 24 28-29 31 35-36', '0 3-4 6 9 24-26 29-34 36', '1 3-5 9 24-25 31', '1 3-4 9 11-12 24-26 29 34-36', '1-3 5 9 11 24-25 31 35-36',
  '1-2 6-9 11 15 20 23-24 26 30-31 34 36', '0 2 5 7 9-10 16-17 20 27 29-32 34', '0 4-6 9 12 15-18 20-25 27-30 32 35-36', '0 2 4-5 10-11 14 17-21 23 26-27 29 31-33 35-36',
  '0 2-4 6 9 12 14 17-18 20 23-33', '8 11 13 15-18 23 26 28 32', '10-20 22 26 28 30 32-33 36', '13 20 22-23 26 28 32 35', '8-9 11-12 14-16 20 23 25-32 34-36',
  '8 12 14 16-21 24-25 28 30 32 34', '8-10 12 14 17 20 22 26 29 31 33 36', '9-10 14 16-20 24 27-29 31-32 36', '9 12-17 19-20 24-26 31-32 34-36',
];

const qrPath = qrRows
  .map((row, y) =>
    row
      .split(' ')
      .map((run) => {
        const [from, to = from] = run.split('-').map(Number);
        return `M${from} ${y}h${to - from + 1}v1h${from - to - 1}z`;
      })
      .join(''),
  )
  .join('');

const QrCode = () => (
  <svg viewBox="-1.100 -1.100 39.200 39.200" role="img" aria-label="QRコード" shapeRendering="geometricPrecision">
    <rect x="-1.100" y="-1.100" width="39.200" height="39.200" fill="#ffffff" />
    <path d={qrPath} fill="#000000" />
    {[[0, 0], [30, 0], [0, 30]].map(([x, y]) => (
      <path key={`${x}-${y}`} transform={`translate(${x} ${y})`} fillRule="evenodd" d="M0 0H7V7H0ZM1 1V6H6V1ZM2 2H5V5H2Z" />
    ))}
    <rect x="12.900" y="12.900" width="11.300" height="11.300" rx="0.800" fill="#ffffff" />
    <circle cx="18.500" cy="18.500" r="2.850" fill="none" stroke="#ff552b" strokeWidth="1.450" />
  </svg>
);

/* ---------- data ---------- */

const stats = [
  { label: '時間', value: '00:07:56', align: 'left' },
  { label: '活動kcal', value: '85', align: 'center' },
  { label: 'ペース', value: '5\'40"', align: 'right' },
  { label: 'BPM', value: '155', align: 'left' },
  { label: '歩数', value: '1192', align: 'center' },
];

const zones = [
  { name: 'ウォーミングアップ', time: '00:00:07', seconds: 7, color: '#0099f0' },
  { name: 'インテンシブ', time: '00:00:11', seconds: 11, color: '#00bb46' },
  { name: '有酸素', time: '00:01:05', seconds: 65, color: '#ffa900' },
  { name: '無酸素', time: '00:06:01', seconds: 361, color: '#ff7b00' },
  { name: '最大酸素摂取量', time: '00:00:23', seconds: 23, color: '#ff2033' },
];

const paces = [
  { km: '1', pace: '5\'48"', note: '', share: 80, color: '#02b26a' },
  { km: '', pace: '5\'20"', note: '最高', share: 74, color: '#02e600' },
];

const SectionHeading = ({ title, badge, icon }: { title: string; badge: string; icon: React.ReactNode }) => (
  <Heading>
    <Badge $color={badge}>{icon}</Badge>
    <h2>{title}</h2>
  </Heading>
);

export default function App() {
  return (
    <>
      <GlobalStyle />
      <Page lang="ja">
        <MapLayer>
          <RouteMap />
        </MapLayer>
        <Content>
          <MapControls>
            <RoundButton type="button" aria-label="現在地"><LocateIcon /></RoundButton>
            <RoundButton type="button" aria-label="マーカーを隠す"><HidePinIcon /></RoundButton>
            <RoundButton type="button" aria-label="地図の種類"><LayersIcon /></RoundButton>
          </MapControls>

          <Card $top={32} $bottom={104}>
            <SummaryHead>
              <div>
                <ActivityTitle>屋外ランニング | Mi Fitness</ActivityTitle>
                <Distance>1.4<span>km</span></Distance>
              </div>
              <Runner>
                <AvatarIcon />
                <Timestamp dateTime="2023-11-15T20:17">2023/11/15 20:17</Timestamp>
              </Runner>
            </SummaryHead>
            <SpeedScale>
              <SpeedLabel $color="#00c985">低速</SpeedLabel>
              <SpeedBar />
              <SpeedLabel $color="#ff5a1f">高速</SpeedLabel>
            </SpeedScale>
            <StatGrid>
              {stats.map((stat) => (
                <Stat key={stat.label} $align={stat.align}>
                  <dt>{stat.label}</dt>
                  <dd>{stat.value}</dd>
                </Stat>
              ))}
            </StatGrid>
          </Card>

          <Card $bottom={51}>
            <SectionHeading title="心拍数" badge="#ee3c60" icon={<HeartIcon />} />
            <ChartBox $top={40}><HeartChart /></ChartBox>
            <ZoneBar>
              {zones.map((zone) => (
                <ZoneSlice key={zone.name} $color={zone.color} $seconds={zone.seconds} />
              ))}
            </ZoneBar>
            <ZoneGrid>
              {zones.map((zone, i) => (
                <ZoneItem key={zone.name} $divider={i % 2 === 0 && i < zones.length - 1}>
                  <div>
                    <ZoneTime>{zone.time}</ZoneTime>
                    <ZoneName $color={zone.color}>{zone.name}</ZoneName>
                  </div>
                </ZoneItem>
              ))}
            </ZoneGrid>
          </Card>

          <Card $bottom={36}>
            <SectionHeading title="ペース" badge="#02b64c" icon={<BarsIcon />} />
            <PaceTable>
              <thead>
                <tr>
                  <th scope="col">km</th>
                  <th scope="col">ペース</th>
                </tr>
              </thead>
              <tbody>
                {paces.map((row) => (
                  <tr key={row.pace}>
                    <th scope="row">{row.km}</th>
                    <td>
                      <PaceTrack>
                        <PaceFill $color={row.color} style={{ width: `${row.share}%` }}>
                          <span>{row.pace}</span>
                          <span>{row.note}</span>
                        </PaceFill>
                      </PaceTrack>
                    </td>
                  </tr>
                ))}
              </tbody>
            </PaceTable>
          </Card>

          <Card $top={40} $bottom={12}>
            <SectionHeading title="ケイデンス" badge="#fca317" icon={<FeetIcon />} />
            <CadenceGrid>
              <div>
                <CadenceValue>150</CadenceValue>
                <CadenceLabel>平均</CadenceLabel>
              </div>
            </CadenceGrid>
            <ChartBox $top={44}><CadenceChart /></ChartBox>
          </Card>

          <Card $bottom={46}>
            <SectionHeading title="その他" badge="#147de0" icon={<BarsIcon />} />
            <SingleStat>
              <Stat>
                <dt>平均ストライド...</dt>
                <dd>117</dd>
              </Stat>
            </SingleStat>
          </Card>

          <Footer>
            <Tracker>トラッカー：Mi Fitness</Tracker>
            <QrBox><QrCode /></QrBox>
            <span>Mi Fitness</span>
          </Footer>
        </Content>
      </Page>
    </>
  );
}
